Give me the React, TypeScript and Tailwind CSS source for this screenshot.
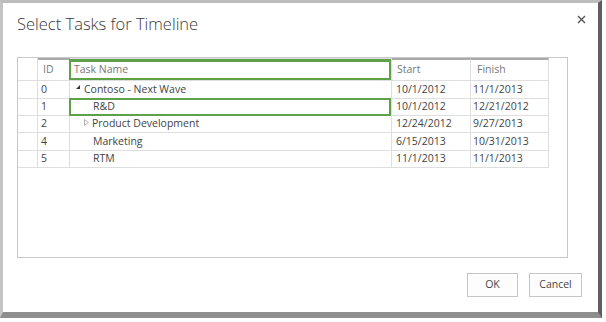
type Task = {
  id: string;
  name: string;
  start: string;
  finish: string;
  indent: boolean;
  toggle?: "open" | "closed";
  selected?: boolean;
  h: string;
};

const tasks: Task[] = [
  { id: "0", name: "Contoso - Next Wave", start: "10/1/2012", finish: "11/1/2013", indent: false, toggle: "open", h: "h-[18px]" },
  { id: "1", name: "R&D", start: "10/1/2012", finish: "12/21/2012", indent: true, selected: true, h: "h-[17px]" },
  { id: "2", name: "Product Development", start: "12/24/2012", finish: "9/27/2013", indent: true, toggle: "closed", h: "h-[17px]" },
  { id: "4", name: "Marketing", start: "6/15/2013", finish: "10/31/2013", indent: true, h: "h-[18px]" },
  { id: "5", name: "RTM", start: "11/1/2013", finish: "11/1/2013", indent: true, h: "h-[17px]" },
];

function Toggle({ kind }: { kind?: "open" | "closed" }) {
  if (kind === "open") {
    return (
      <svg width="5" height="5" viewBox="0 0 5 5" className="mb-[5px]">
        <polygon points="4,0 4,4 0,4" fill="#333" />
      </svg>
    );
  }
  if (kind === "closed") {
    return (
      <svg width="5" height="7" viewBox="0 0 5 7" className="mb-[4px]">
        <polygon points="0.5,0.5 4.3,3.5 0.5,6.5" fill="none" stroke="#b0b0b0" strokeWidth="1" />
      </svg>
    );
  }
  return null;
}

export default function App() {
  return (
    <div className="w-[606px] h-[322px] bg-white font-['Open_Sans',sans-serif]">
      <div className="w-[602px] h-[318px] bg-white border-l-[3px] border-t-[3px] border-r-[4px] border-b-[6px] border-l-[#c4c4c4] border-t-[#bdbdbd] border-r-[#5e5e5e] border-b-[#8e8e8e] flex flex-col">
        {/* title */}
        <div className="h-[54px] flex items-start justify-between pl-[14px] pr-[12px] pt-[10px]">
          <h1 className="text-[16.5px] font-light text-[#3a3a3a] leading-[22px]">Select Tasks for Timeline</h1>
          <svg width="9" height="9" viewBox="0 0 9 9" className="mt-[2px]">
            <path d="M1 1 L8 8 M8 1 L1 8" stroke="#555" strokeWidth="1.4" />
          </svg>
        </div>

        {/* grid */}
        <div className="ml-[14px] w-[551px] h-[201px] border border-[#c8c8c8] text-[10.5px] text-[#444]">
          <div className="flex h-[23px] text-[#777]">
            <div className="w-[20px] border-r border-b border-[#dedede]" />
            <div className="w-[32px] border-t-2 border-t-[#a9a9a9] border-b border-b-[#dedede] pl-[5px] flex items-center">ID</div>
            <div className="relative w-[322px] border-t-2 border-b border-r border-[#dedede] pl-[4px] flex items-center">
              Task Name
              <div className="absolute -top-px -left-px right-0 bottom-0 border-2 border-t-[3px] border-[#5fa04a]" />
            </div>
            <div className="w-[79px] border-t-2 border-t-[#a9a9a9] border-b border-r border-b-[#dedede] border-r-[#dedede] pl-[5px] flex items-center">Start</div>
            <div className="w-[78px] border-t-2 border-t-[#a9a9a9] border-b border-r border-b-[#dedede] border-r-[#dedede] pl-[6px] flex items-center">Finish</div>
          </div>
          {tasks.map((t) => (
            <div key={t.id} className={`flex w-[531px] border-b border-[#dedede] ${t.h}`}>
              <div className="w-[20px] border-r border-[#dedede]" />
              <div className="w-[32px] border-r border-[#dedede] pl-[3px] flex items-center">{t.id}</div>
              <div className={`relative w-[322px] border-r border-[#dedede] flex items-center gap-[3px] ${t.indent ? "pl-[14px]" : "pl-[6px]"}`}>
                {t.toggle ? <Toggle kind={t.toggle} /> : null}
                <span className={t.indent && !t.toggle ? "pl-[9px]" : ""}>{t.name}</span>
                {t.selected ? <div className="absolute -top-px -left-px right-0 -bottom-px border-2 border-[#5fa04a]" /> : null}
              </div>
              <div className="w-[79px] border-r border-[#dedede] pl-[4px] flex items-center">{t.start}</div>
              <div className="w-[78px] border-r border-[#dedede] pl-[2px] flex items-center">{t.finish}</div>
            </div>
          ))}
        </div>

        {/* buttons */}
        <div className="flex justify-end gap-[11px] pr-[16px] mt-[15px]">
          <button className="w-[51px] h-[24px] border border-[#c6c6c6] bg-[#fdfdfd] text-[10.5px] text-[#444]">OK</button>
          <button className="w-[53px] h-[24px] border border-[#c6c6c6] bg-[#fdfdfd] text-[10.5px] text-[#444]">Cancel</button>
        </div>
      </div>
    </div>
  );
}
